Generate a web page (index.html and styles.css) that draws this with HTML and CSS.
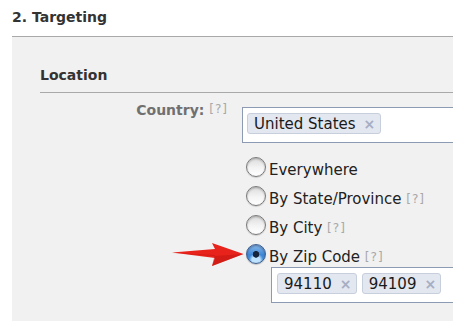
FILE: index.html
```html
<!DOCTYPE html>
<html>
<head>
<meta charset="utf-8">
<link rel="stylesheet" href="styles.css">
</head>
<body>
<h2 class="title">2. Targeting</h2>
<section class="panel">
  <h3 class="subtitle">Location</h3>
  <div class="row">
    <div class="label">Country: <span class="help">[?]</span></div>
    <div class="field">
      <div class="tokens country">
        <span class="token">United States<span class="x">×</span></span>
      </div>
      <ul class="radios">
        <li><span class="radio"></span>Everywhere</li>
        <li><span class="radio"></span>By State/Province <span class="help">[?]</span></li>
        <li><span class="radio"></span>By City <span class="help">[?]</span></li>
        <li><span class="radio on"></span>By Zip Code <span class="help">[?]</span></li>
      </ul>
      <div class="tokens zip">
        <span class="token">94110<span class="x">×</span></span>
        <span class="token">94109<span class="x">×</span></span>
      </div>
    </div>
  </div>
</section>
<svg class="arrow" width="80" height="30" viewBox="170 240 80 30">
  <path d="M172,252.5 L215,249 L212,243 L243.5,254 L212,266 L215,258 Z" fill="#e8231b"/>
  <path d="M172,253 L215,255 L214,258 L212,266 L243.5,254 L215,256 Z" fill="#c41812" opacity="0.6"/>
</svg>
</body>
</html>
```

FILE: styles.css
```css
html, body {
  margin: 0;
  padding: 0;
  background: #fff;
  overflow: hidden;
  width: 453px;
  height: 321px;
}
body {
  font-family: "DejaVu Sans", sans-serif;
  color: #222;
  position: relative;
}
.title {
  margin: 0;
  padding: 9px 12px 0;
  font-size: 14px;
  line-height: 17px;
  font-weight: bold;
  color: #333;
  height: 17px;
  margin-bottom: 10px;
}
.panel {
  box-sizing: border-box;
  margin-left: 12px;
  border-top: 1px solid #a9a9a9;
  background: #f1f1f1;
  padding: 30px 0 0 28px;
  height: 285px;
  overflow: hidden;
}
.subtitle {
  margin: 0;
  font-size: 14px;
  line-height: 17px;
  font-weight: bold;
  color: #333;
  padding-bottom: 8px;
  border-bottom: 1px solid #a9a9a9;
}
.row {
  display: flex;
  gap: 12px;
  margin-top: 8px;
}
.label {
  flex: 0 0 auto;
  box-sizing: border-box;
  width: 190px;
  padding-right: 2px;
  text-align: right;
  font-size: 14px;
  font-weight: bold;
  color: #707070;
  line-height: 17px;
  white-space: nowrap;
}
.help {
  font-size: 12px;
  font-weight: normal;
  color: #a8a8a8;
  letter-spacing: 1px;
  vertical-align: 2px;
}
.field {
  flex: 0 0 auto;
  display: flex;
  flex-direction: column;
  margin-top: 6px;
}
.tokens {
  flex: 0 0 auto;
  box-sizing: border-box;
  height: 36px;
  border: 1px solid #8c9ab4;
  background: #fff;
  padding: 5px 4px;
  display: flex;
  gap: 5px;
  align-items: flex-start;
}
.country {
  width: 260px;
}
.zip {
  width: 200px;
  margin-left: 29px;
  margin-top: -5px;
  padding-left: 5px;
}
.token {
  flex: 0 0 auto;
  box-sizing: border-box;
  height: 21px;
  display: inline-flex;
  align-items: center;
  padding: 0 6px 0 6px;
  background: #e3e7f0;
  border: 1px solid #c7cedc;
  border-radius: 3px;
  font-size: 15px;
  color: #1a1a1a;
}
.x {
  margin-left: 8px;
  font-size: 14px;
  font-weight: bold;
  color: #a6aec4;
  width: 10px;
  text-align: center;
}
.radios {
  list-style: none;
  margin: 13px 0 0;
  padding: 0 0 0 4px;
}
.radios li {
  height: 29px;
  line-height: 29px;
  font-size: 15px;
  display: flex;
  align-items: flex-start;
  white-space: pre;
}
.radio {
  flex: 0 0 auto;
  box-sizing: border-box;
  width: 20px;
  height: 20px;
  margin-top: 1px;
  margin-right: 3px;
  border-radius: 50%;
  border: 1px solid #7a7a7a;
  background: linear-gradient(#dcdcdc, #f4f4f4 55%, #ffffff);
  box-shadow: inset 0 1px 2px rgba(0,0,0,0.25), 0 1px 1px rgba(0,0,0,0.15);
}
.radio.on {
  border-color: #3f5f8e;
  background:
    radial-gradient(circle at 50% 52%, #16243c 0 3px, transparent 3.6px),
    radial-gradient(circle at 50% 85%, #bfe3ff 0 4px, transparent 7px),
    linear-gradient(#8bbbea, #3e86d6 55%, #5ea6ec);
  box-shadow: inset 0 1px 2px rgba(0,0,40,0.35), 0 1px 1px rgba(0,0,0,0.2);
}
.arrow {
  position: absolute;
  left: 170px;
  top: 240px;
}
```
